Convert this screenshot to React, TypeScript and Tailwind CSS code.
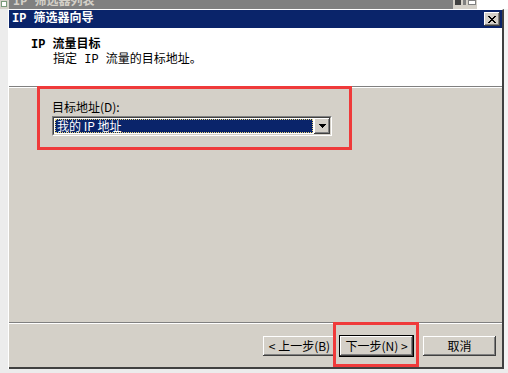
const raised =
  "shadow-[inset_-1px_-1px_#404040,inset_1px_1px_#ffffff,inset_-2px_-2px_#808080,inset_2px_2px_#d4d0c8]";

const monoCjk = { fontFamily: '"Liberation Mono", "Noto Sans CJK SC", monospace' };

function CloseButton() {
  return (
    <div className={`flex h-[14px] w-[16px] items-center justify-center bg-[#d4d0c8] ${raised}`}>
      <svg width="8" height="7" viewBox="0 0 8 7" shapeRendering="crispEdges">
        <path d="M0 0h2v1h-2zM6 0h2v1h-2zM1 1h2v1h-2zM5 1h2v1h-2zM2 2h4v1h-4zM3 3h2v1h-2zM2 4h4v1h-4zM1 5h2v1h-2zM5 5h2v1h-2zM0 6h2v1h-2zM6 6h2v1h-2z" fill="#000" />
      </svg>
    </div>
  );
}

function Btn({ label, primary }: { label: string; primary?: boolean }) {
  return (
    <div className={primary ? "border border-black" : "border border-transparent"}>
      <div
        className={`flex h-[20px] w-[73px] items-center justify-center bg-[#d4d0c8] text-[12px] leading-none text-black ${raised}`}
      >
        {label}
      </div>
    </div>
  );
}

export default function App() {
  return (
    <div
      className="relative h-[373px] w-[508px] overflow-hidden bg-[#ececec] text-black"
      style={{ fontFamily: '"Noto Sans CJK SC", "Liberation Sans", sans-serif' }}
    >
      {/* background window title strip */}
      <div className="flex h-[9px]">
        <div className="w-[9px] bg-[#d4d0c8]">
          <div className="ml-[1px] mt-[1px] h-[6px] w-[6px] border border-[#7a9a7a] bg-white"></div>
        </div>
        <div className="w-[444px] overflow-hidden bg-[#808080] pl-[4px]">
          <div className="-mt-[5px] text-[12px] font-bold leading-[14px] text-[#d4d0c8]" style={monoCjk}>
            IP 筛选器列表
          </div>
        </div>
        <div className="flex w-[24px] items-start gap-[2px] bg-[#d4d0c8] pl-[2px]">
          <div className="h-[5px] w-[6px] bg-[#404040]"></div>
          <div className="h-[5px] w-[3px] bg-[#808080]"></div>
          <div className="h-[5px] w-[8px] border border-[#808080] bg-white"></div>
        </div>
        <div className="flex-1 bg-white"></div>
      </div>

      <div className="flex">
        <div className="w-[9px] border-r border-white"></div>

        {/* dialog */}
        <div className="flex h-[360px] w-[495px] flex-col border-r-2 border-b-2 border-t border-[#404040] border-t-[#ffffff] bg-[#d4d0c8]">
          {/* title bar */}
          <div className="flex h-[18px] items-center justify-between bg-[#0a246a] pl-[3px] pr-[2px]">
            <span className="text-[12px] font-bold leading-none text-white" style={monoCjk}>
              IP 筛选器向导
            </span>
            <CloseButton />
          </div>

          {/* header */}
          <div className="h-[58px] bg-white pl-[22px] pt-[10px] text-[12px] leading-[15px]" style={monoCjk}>
            <div className="font-bold">IP 流量目标</div>
            <div className="pl-[22px]">指定 IP 流量的目标地址。</div>
          </div>
          <div className="h-[2px] border-t border-b border-t-[#808080] border-b-white"></div>

          {/* body */}
          <div className="h-[234px] pl-[43px] pt-[11px]">
            <div className="text-[12px] leading-[15px]">目标地址(D):</div>
            <div className="mt-[2px] flex h-[20px] w-[280px] flex-col border border-[#808080] border-r-white border-b-white">
              <div className="flex flex-1 border border-[#404040] border-r-[#d4d0c8] border-b-[#d4d0c8] bg-white">
                <div className="m-[1px] flex flex-1 items-center border border-dotted border-[#e8d27a] bg-[#0a246a] pl-[1px] text-[12px] leading-none text-white">
                  我的 IP 地址
                </div>
                <div className={`flex h-[16px] w-[16px] items-center justify-center bg-[#d4d0c8] ${raised}`}>
                  <svg width="7" height="4" viewBox="0 0 7 4" shapeRendering="crispEdges">
                    <path d="M0 0h7v1h-7zM1 1h5v1h-5zM2 2h3v1h-3zM3 3h1v1h-1z" fill="#000" />
                  </svg>
                </div>
              </div>
            </div>
          </div>
          <div className="h-[2px] border-t border-b border-t-[#808080] border-b-white"></div>

          {/* buttons */}
          <div className="flex flex-1 items-start justify-end pr-[5px] pt-[11px]">
            <div className="flex gap-[2px]">
              <Btn label="< 上一步(B)" />
              <Btn label="下一步(N) >" primary />
            </div>
            <div className="ml-[8px]">
              <Btn label="取消" />
            </div>
          </div>
        </div>

        <div className="flex-1 bg-[#f4f4f4]"></div>
      </div>

      {/* annotation frames */}
      <div className="absolute left-[37px] top-[86px] h-[64px] w-[315px] border-[3px] border-[#ef3a3a]"></div>
      <div className="absolute left-[333px] top-[322px] h-[45px] w-[86px] border-[3px] border-[#ef3a3a]"></div>
    </div>
  );
}
